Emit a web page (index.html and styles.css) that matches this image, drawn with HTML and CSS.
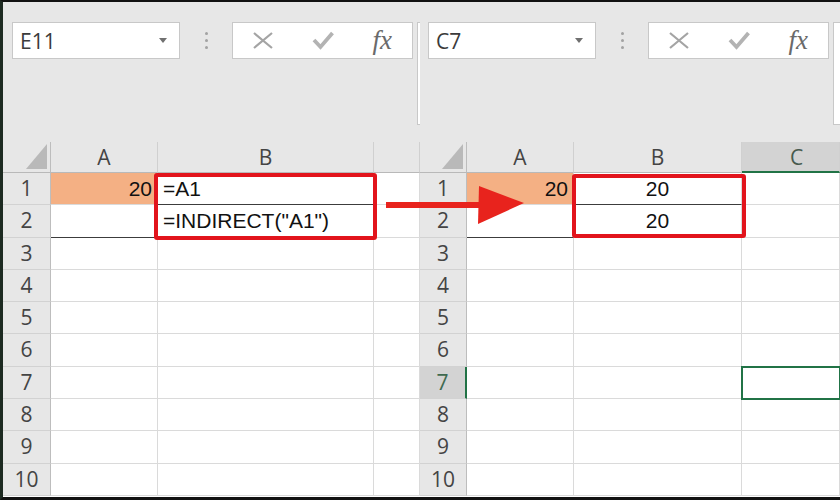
FILE: index.html
```html
<!DOCTYPE html>
<html lang="en">
<head>
    <meta charset="UTF-8">
    <title>INDIRECT</title>
    <link rel="stylesheet" href="styles.css">
</head>
<body>
    <div class="shot">
        <!-- Left window: formulas -->
        <section class="pane left">
            <div class="fbar">
                <div class="namebox"><span>E11</span><i class="drop"></i></div>
                <div class="grip"><i></i><i></i><i></i></div>
                <div class="fxbox">
                    <span class="btn"><svg width="20" height="17" viewBox="0 0 20 17"><path d="M1 1 L19 16 M19 1 L1 16" stroke="#a4a4a4" stroke-width="2.2" fill="none"/></svg></span>
                    <span class="btn"><svg width="22" height="19" viewBox="0 0 22 19"><path d="M2 9 L8.5 16 L20.5 2" stroke="#b3b3b3" stroke-width="3.8" fill="none"/></svg></span>
                    <span class="btn fx">fx</span>
                </div>
                <div class="input"></div>
            </div>
            <div class="sheet">
                <div class="corner"><i></i></div><div class="ch">A</div><div class="ch">B</div><div class="ch"></div>
                <div class="rh">1</div><div class="c fill num">20</div><div class="c dk host">=A1<span class="mark"></span></div><div class="c"></div>
                <div class="rh">2</div><div class="c dk"></div><div class="c">=INDIRECT("A1")</div><div class="c"></div>
                <div class="rh">3</div><div class="c"></div><div class="c"></div><div class="c"></div>
                <div class="rh">4</div><div class="c"></div><div class="c"></div><div class="c"></div>
                <div class="rh">5</div><div class="c"></div><div class="c"></div><div class="c"></div>
                <div class="rh">6</div><div class="c"></div><div class="c"></div><div class="c"></div>
                <div class="rh">7</div><div class="c"></div><div class="c"></div><div class="c"></div>
                <div class="rh">8</div><div class="c"></div><div class="c"></div><div class="c"></div>
                <div class="rh">9</div><div class="c"></div><div class="c"></div><div class="c"></div>
                <div class="rh">10</div><div class="c"></div><div class="c"></div><div class="c"></div>
            </div>
        </section>

        <!-- Right window: results -->
        <section class="pane right">
            <div class="fbar">
                <div class="namebox"><span>C7</span><i class="drop"></i></div>
                <div class="grip"><i></i><i></i><i></i></div>
                <div class="fxbox">
                    <span class="btn"><svg width="20" height="17" viewBox="0 0 20 17"><path d="M1 1 L19 16 M19 1 L1 16" stroke="#a4a4a4" stroke-width="2.2" fill="none"/></svg></span>
                    <span class="btn"><svg width="22" height="19" viewBox="0 0 22 19"><path d="M2 9 L8.5 16 L20.5 2" stroke="#b3b3b3" stroke-width="3.8" fill="none"/></svg></span>
                    <span class="btn fx">fx</span>
                </div>
                <div class="input"></div>
            </div>
            <div class="sheet">
                <div class="corner"><i></i></div><div class="ch">A</div><div class="ch">B</div><div class="ch on">C</div>
                <div class="rh">1</div><div class="c fill num">20</div><div class="c dk ctr host">20<span class="mark"></span></div><div class="c"></div>
                <div class="rh">2</div><div class="c dk"></div><div class="c ctr">20</div><div class="c"></div>
                <div class="rh">3</div><div class="c"></div><div class="c"></div><div class="c"></div>
                <div class="rh">4</div><div class="c"></div><div class="c"></div><div class="c"></div>
                <div class="rh">5</div><div class="c"></div><div class="c"></div><div class="c"></div>
                <div class="rh">6</div><div class="c"></div><div class="c"></div><div class="c"></div>
                <div class="rh on">7</div><div class="c"></div><div class="c"></div><div class="c sel"></div>
                <div class="rh">8</div><div class="c"></div><div class="c"></div><div class="c"></div>
                <div class="rh">9</div><div class="c"></div><div class="c"></div><div class="c"></div>
                <div class="rh">10</div><div class="c"></div><div class="c"></div><div class="c"></div>
            </div>
        </section>

        <!-- Red arrow between the two windows -->
        <svg class="arrow" width="840" height="500" viewBox="0 0 840 500">
            <rect x="386" y="202" width="96" height="6" fill="#e8231d"/>
            <polygon points="479,186 524,203 478,224" fill="#e8231d"/>
        </svg>
    </div>
</body>
</html>
```

FILE: styles.css
```css
/* Page */
* {
    box-sizing: border-box;
}

body {
    margin: 0;
    font-family: "Liberation Sans", Arial, sans-serif;
    background: #fff;
}

/* Screenshot frame with dark edges */
.shot {
    position: relative;
    width: 840px;
    height: 500px;
    display: flex;
    overflow: hidden;
    border-top: 2px solid #121212;
    border-bottom: 3px solid #121212;
    border-left: 3px solid #1d2a21;
}

.pane {
    display: flex;
    flex-direction: column;
    background: #e7e7e7;
}

.left {
    width: 417px;
}

.right {
    width: 420px;
}

/* Formula bar */
.fbar {
    height: 140px;
    display: flex;
    align-items: flex-start;
    padding-top: 20px;
}

.left .fbar {
    padding-left: 9px;
}

.right .fbar {
    padding-left: 8px;
}

.namebox {
    width: 168px;
    height: 37px;
    display: flex;
    align-items: center;
    justify-content: space-between;
    padding: 0 12px 0 7px;
    background: #fff;
    border: 1px solid #c8c8c8;
    font-family: "Open Sans", sans-serif;
    font-size: 21px;
    color: #3b3b3b;
}

.drop {
    width: 0;
    height: 0;
    border-left: 4px solid transparent;
    border-right: 4px solid transparent;
    border-top: 5px solid #707070;
}

.grip {
    width: 52px;
    height: 37px;
    display: flex;
    flex-direction: column;
    align-items: center;
    justify-content: center;
    gap: 4px;
}

.grip i {
    width: 3px;
    height: 3px;
    border-radius: 50%;
    background: #a2a2a2;
}

.fxbox {
    width: 181px;
    height: 37px;
    display: flex;
    background: #fff;
    border: 1px solid #c8c8c8;
}

.btn {
    width: 60px;
    display: flex;
    align-items: center;
    justify-content: center;
}

.fx {
    font-family: "Liberation Serif", serif;
    font-style: italic;
    font-size: 27px;
    color: #6a6a6a;
}

.input {
    flex: 1;
    height: 103px;
    margin-left: 4px;
    background: #fff;
    border: 1px solid #c8c8c8;
    border-right: 0;
}

/* Worksheet grid */
.sheet {
    flex: 1;
    display: grid;
    grid-template-rows: 31px repeat(10, 32.3px);
    background: #fff;
    font-size: 21px;
}

.left .sheet {
    grid-template-columns: 48px 107px 216px 1fr;
}

.right .sheet {
    grid-template-columns: 47px 107px 168px 1fr;
}

.corner {
    display: flex;
    justify-content: flex-end;
    align-items: flex-end;
    padding: 0 3px 3px 0;
    background: #e7e7e7;
    border-right: 1px solid #bdbdbd;
    border-bottom: 1px solid #b9b9b9;
}

.corner i {
    width: 0;
    height: 0;
    border-left: 21px solid transparent;
    border-bottom: 25px solid #b9b9b9;
}

.ch,
.rh {
    background: #e7e7e7;
    font-family: "Open Sans", sans-serif;
    color: #444;
    text-align: center;
    line-height: 30px;
}

.ch {
    border-right: 1px solid #d0d0d0;
    border-bottom: 1px solid #b9b9b9;
}

.rh {
    border-right: 1px solid #bdbdbd;
    border-bottom: 1px solid #d2d2d2;
    line-height: 31px;
}

/* Selected header (C / 7) */
.ch.on {
    background: #d3d3d3;
    border-bottom: 2px solid #217346;
    padding-left: 12px;
    color: #475a4e;
}

.rh.on {
    background: #d3d3d3;
    border-right: 2px solid #217346;
    color: #3f6a50;
}

.c {
    padding: 0 5px;
    border-right: 1px solid #dadada;
    border-bottom: 1px solid #dadada;
    line-height: 31px;
    white-space: nowrap;
    color: #111;
}

.fill {
    background: #f4b084;
}

.num {
    text-align: right;
}

.ctr {
    text-align: center;
}

.dk {
    border-bottom-color: #3c3c3c;
}

.sel {
    outline: 2px solid #217346;
    outline-offset: -1px;
    z-index: 1;
}

/* Red highlight box over B1:B2 */
.host {
    position: relative;
}

.mark {
    position: absolute;
    top: 0;
    left: -4px;
    right: -4px;
    height: 67px;
    border: 4px solid #e2141c;
    border-radius: 3px;
    z-index: 2;
}

.right .mark {
    top: 1px;
    left: -2px;
    right: -5px;
    height: 64px;
}

/* Arrow overlay */
.arrow {
    position: absolute;
    left: -3px;
    top: -2px;
    pointer-events: none;
}
```
